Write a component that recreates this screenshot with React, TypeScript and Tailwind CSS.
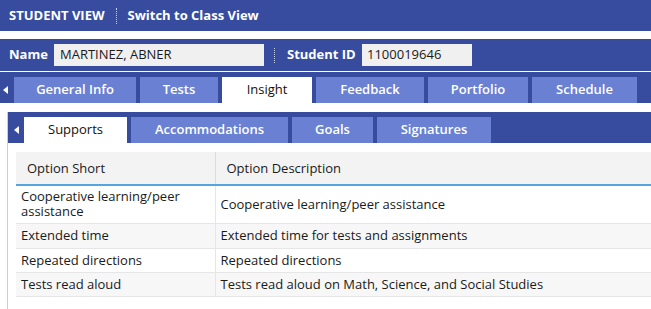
const mainTabs = [
  { label: "General Info", w: "w-[122px]" },
  { label: "Tests", w: "w-[78px]" },
  { label: "Insight", w: "w-[90px]", active: true },
  { label: "Feedback", w: "w-[108px]" },
  { label: "Portfolio", w: "w-[100px]" },
  { label: "Schedule", w: "w-[105px]" },
];

const subTabs = [
  { label: "Supports", w: "w-[103px]", active: true },
  { label: "Accommodations", w: "w-[157px]" },
  { label: "Goals", w: "w-[81px]" },
  { label: "Signatures", w: "w-[114px]" },
];

const rows = [
  { short: "Cooperative learning/peer assistance", desc: "Cooperative learning/peer assistance", h: "h-[38px]" },
  { short: "Extended time", desc: "Extended time for tests and assignments", h: "h-[25px]" },
  { short: "Repeated directions", desc: "Repeated directions", h: "h-[24px]" },
  { short: "Tests read aloud", desc: "Tests read aloud on Math, Science, and Social Studies", h: "h-[24px]" },
];

const Tab = ({ label, w, active }: { label: string; w: string; active?: boolean }) => (
  <div
    className={
      "h-[26px] flex items-center justify-center text-[13px] " +
      w +
      (active ? " bg-white text-[#111] font-medium" : " bg-[#6a80d2] text-white font-semibold")
    }
  >
    {label}
  </div>
);

const Arrow = () => (
  <svg width="5" height="8" viewBox="0 0 5 8">
    <path d="M5 0 L0 4 L5 8 Z" fill="white" />
  </svg>
);

const App = () => {
  return (
    <div className="w-[651px] h-[309px] bg-white overflow-hidden font-['Open_Sans',sans-serif] text-[#1a1a1a]">
      <div className="h-[31px] bg-[#384c9f] flex items-center pl-[9px] text-white font-bold text-[13px]">
        <span>STUDENT VIEW</span>
        <span className="h-[16px] border-l border-dotted border-[#c9d0ee] mx-[11px]" />
        <span>Switch to Class View</span>
      </div>

      <div className="h-[8px]" />

      <div className="bg-[#384c9f]">
        <div className="h-[32px] flex items-center pl-[9px] text-[13px]">
          <span className="text-white font-bold w-[45px]">Name</span>
          <div className="w-[210px] h-[22px] bg-[#f0f0f0] flex items-center pl-[6px] font-medium">
            MARTINEZ, ABNER
          </div>
          <span className="h-[15px] border-l border-dotted border-[#c9d0ee] ml-[10px] mr-[12px]" />
          <span className="text-white font-bold w-[75px]">Student ID</span>
          <div className="w-[110px] h-[22px] bg-[#f0f0f0] flex items-center pl-[5px] font-medium">
            1100019646
          </div>
        </div>
        <div className="h-px bg-white" />
        <div className="h-[31px] flex items-end gap-[4px]">
          <div className="w-[10px] h-[26px] flex items-center justify-center">
            <Arrow />
          </div>
          {mainTabs.map((t) => (
            <Tab key={t.label} {...t} />
          ))}
        </div>
      </div>

      <div className="h-[9px]" />

      <div className="ml-[7px] border-l border-[#cfcfcf] h-[200px]">
        <div className="h-[31px] bg-[#384c9f] flex items-end">
          <div className="w-[16px] h-[26px] flex items-center justify-center">
            <Arrow />
          </div>
          <div className="flex gap-[4px]">
            {subTabs.map((t) => (
              <Tab key={t.label} {...t} />
            ))}
          </div>
        </div>

        <div className="pl-[8px] pt-[9px]">
          <table className="w-[640px] border-collapse text-[13px] leading-[15px]">
            <thead>
              <tr className="h-[33px] bg-[#f3f3f3] border-b-2 border-[#55a6e0]">
                <th className="w-[199px] text-left font-medium pl-[11px] border-r border-[#dcdcdc]">Option Short</th>
                <th className="text-left font-medium pl-[11px]">Option Description</th>
              </tr>
            </thead>
            <tbody>
              {rows.map((r, i) => (
                <tr key={i} className={r.h + " border-b border-[#e6e6e6] " + (i % 2 ? "bg-[#f7f7f7]" : "bg-white")}>
                  <td className="pl-[5px] pr-[4px] border-r border-[#e6e6e6]">{r.short}</td>
                  <td className="pl-[5px]">{r.desc}</td>
                </tr>
              ))}
            </tbody>
          </table>
        </div>
      </div>
    </div>
  );
};

export default App;
